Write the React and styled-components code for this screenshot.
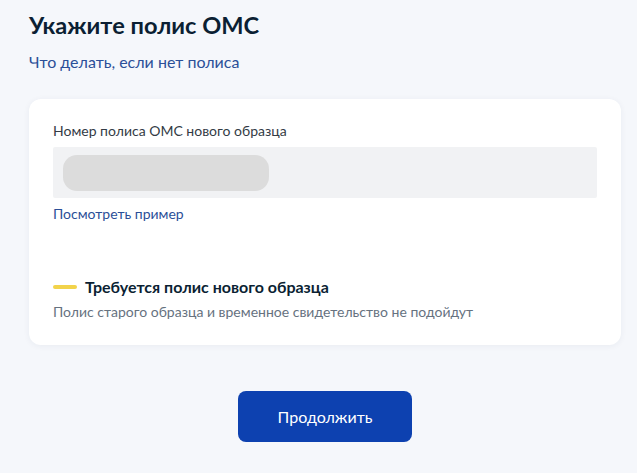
import React from 'react'
import styled, { createGlobalStyle } from 'styled-components'

const GlobalStyle = createGlobalStyle`
    html, body {
        margin: 0;
        padding: 0;
        background: #f5f7fb;
    }
    body {
        font-family: Lato, "Noto Sans", "Liberation Sans", sans-serif;
        color: #0b1f33;
    }
`

const Page = styled.div`
    padding: 10px 16px 0 29px;
    display: flex;
    flex-direction: column;
`

const Title = styled.h1`
    margin: 0;
    font-size: 23.6px;
    line-height: 30px;
    font-weight: 700;
    color: #0b1f33;
`

const TopLink = styled.a`
    margin-top: 12px;
    font-size: 16px;
    line-height: 20px;
    color: #2b4f98;
    text-decoration: none;
    align-self: flex-start;
`

const Card = styled.section`
    margin-top: 27px;
    width: 592px;
    box-sizing: border-box;
    background: #fff;
    border-radius: 12px;
    box-shadow: 0 1px 6px rgba(30, 50, 90, 0.06);
    padding: 23px 24px 24px;
    display: flex;
    flex-direction: column;
`

const Label = styled.div`
    font-size: 14px;
    line-height: 18px;
    color: #333b45;
`

const InputBox = styled.div`
    margin-top: 7px;
    height: 51px;
    background: #f1f2f4;
    border-radius: 2px;
    display: flex;
    align-items: center;
    padding: 0 10px;
`

const Skeleton = styled.div`
    width: 206px;
    height: 36px;
    border-radius: 14px;
    background: #dcdcdc;
`

const SmallLink = styled.a`
    margin-top: 7px;
    font-size: 14px;
    line-height: 18px;
    color: #2b4f98;
    text-decoration: none;
    align-self: flex-start;
`

const Notice = styled.div`
    margin-top: 54px;
    display: flex;
    flex-direction: column;
    gap: 6px;
`

const NoticeHead = styled.div`
    display: flex;
    align-items: center;
    gap: 8px;
    font-size: 16px;
    line-height: 20px;
    font-weight: 700;
    color: #0b1f33;
`

const Dash = styled.span`
    width: 24px;
    height: 4px;
    border-radius: 2px;
    background: ${p => p.color};
`

const NoticeText = styled.div`
    font-size: 14px;
    line-height: 18px;
    color: #66727f;
`

const Footer = styled.div`
    display: flex;
    justify-content: center;
    width: 592px;
    margin-top: 46px;
`

const Button = styled.button`
    width: 174px;
    height: 51px;
    border: none;
    border-radius: 8px;
    background: #0d41b0;
    color: #fff;
    font-family: inherit;
    font-size: 16px;
    cursor: pointer;
`

const App = () => {
    return (
        <Page>
            <GlobalStyle />
            <Title>Укажите полис ОМС</Title>
            <TopLink href="#">Что делать, если нет полиса</TopLink>
            <Card>
                <Label>Номер полиса ОМС нового образца</Label>
                <InputBox>
                    <Skeleton />
                </InputBox>
                <SmallLink href="#">Посмотреть пример</SmallLink>
                <Notice>
                    <NoticeHead>
                        <Dash color="#f2d34b" />
                        Требуется полис нового образца
                    </NoticeHead>
                    <NoticeText>Полис старого образца и временное свидетельство не подойдут</NoticeText>
                </Notice>
            </Card>
            <Footer>
                <Button type="button">Продолжить</Button>
            </Footer>
        </Page>
    )
}

export default App
